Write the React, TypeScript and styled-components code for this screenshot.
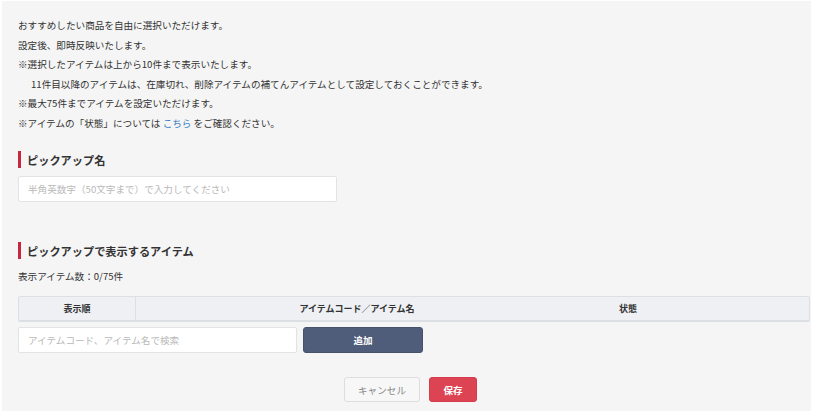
import React from 'react';
import styled, { createGlobalStyle } from 'styled-components';

const GlobalStyle = createGlobalStyle`
  html, body {
    margin: 0;
    padding: 0;
    background: #ffffff;
  }
  * {
    box-sizing: border-box;
  }
  input::placeholder {
    color: #b9b9b9;
  }
`;

const FONT = `"Noto Sans CJK JP", "Noto Sans", "Liberation Sans", sans-serif`;

const notes = [
  'おすすめしたい商品を自由に選択いただけます。',
  '設定後、即時反映いたします。',
  '※選択したアイテムは上から10件まで表示いたします。',
];

export default function App() {
  return (
    <>
      <GlobalStyle />
      <Page>
        <Panel>
          <Notes>
            {notes.map((n) => (
              <Note key={n}>{n}</Note>
            ))}
            <Note $indent>11件目以降のアイテムは、在庫切れ、削除アイテムの補てんアイテムとして設定しておくことができます。</Note>
            <Note>※最大75件までアイテムを設定いただけます。</Note>
            <Note>
              ※アイテムの「状態」については <Link>こちら</Link> をご確認ください。
            </Note>
          </Notes>

          <SectionTitle $top={18}>ピックアップ名</SectionTitle>
          <NameInput placeholder="半角英数字（50文字まで）で入力してください" />

          <SectionTitle $top={40}>ピックアップで表示するアイテム</SectionTitle>
          <Count>表示アイテム数：0/75件</Count>

          <TableHead>
            <HeadCell $divider>表示順</HeadCell>
            <HeadCell>アイテムコード／アイテム名</HeadCell>
            <HeadCell>状態</HeadCell>
            <HeadCell />
          </TableHead>

          <SearchRow>
            <SearchInput placeholder="アイテムコード、アイテム名で検索" />
            <AddButton>追加</AddButton>
          </SearchRow>

          <Actions>
            <CancelButton>キャンセル</CancelButton>
            <SaveButton>保存</SaveButton>
          </Actions>
        </Panel>
      </Page>
    </>
  );
}

const Page = styled.div`
  width: 813px;
  height: 414px;
  padding: 1px 2px 3px 2px;
  font-family: ${FONT};
  color: #333333;
`;

const Panel = styled.div`
  height: 410px;
  background: #f5f5f5;
  padding: 15px 1px 0 16px;
  display: flex;
  flex-direction: column;
`;

const Notes = styled.div`
  display: flex;
  flex-direction: column;
`;

const Note = styled.div<{ $indent?: boolean }>`
  font-size: 9.6px;
  line-height: 19.5px;
  color: #333333;
  white-space: nowrap;
  padding-left: ${(p) => (p.$indent ? '13px' : '0')};
`;

const Link = styled.span`
  color: #3b7fc4;
`;

const SectionTitle = styled.div<{ $top: number }>`
  margin-top: ${(p) => p.$top}px;
  height: 17px;
  border-left: 3px solid #c9253d;
  padding-left: 6px;
  display: flex;
  align-items: center;
  font-size: 11.2px;
  font-weight: 700;
  color: #333333;
`;

const BaseInput = styled.input`
  height: 26px;
  border: 1px solid #e3e3e3;
  border-radius: 2px;
  background: #ffffff;
  padding: 0 9px;
  font-family: ${FONT};
  font-size: 9.6px;
  color: #333333;
  outline: none;
`;

const NameInput = styled(BaseInput)`
  margin-top: 8px;
  width: 319px;
`;

const Count = styled.div`
  margin-top: 8px;
  font-size: 9.6px;
  line-height: 19px;
`;

const TableHead = styled.div`
  margin-top: 10px;
  height: 26px;
  display: grid;
  grid-template-columns: 117px 442px 100px 1fr;
  background: #eef0f3;
  border: 1px solid #dcdfe4;
  border-bottom-width: 2px;
  border-radius: 2px;
`;

const HeadCell = styled.div<{ $divider?: boolean }>`
  display: flex;
  align-items: center;
  justify-content: center;
  font-size: 9px;
  font-weight: 700;
  color: #333333;
  border-right: ${(p) => (p.$divider ? '1px solid #dcdfe4' : 'none')};
`;

const SearchRow = styled.div`
  margin-top: 5px;
  display: flex;
  gap: 6px;
`;

const SearchInput = styled(BaseInput)`
  width: 279px;
`;

const Button = styled.button`
  font-family: ${FONT};
  border-radius: 3px;
  display: flex;
  align-items: center;
  justify-content: center;
  padding: 0;
  cursor: pointer;
`;

const AddButton = styled(Button)`
  width: 120px;
  height: 26px;
  background: #505d7a;
  border: 1px solid #46526c;
  color: #ffffff;
  font-size: 9.6px;
  font-weight: 700;
`;

const Actions = styled.div`
  margin-top: 24px;
  display: flex;
  justify-content: center;
  gap: 9px;
  padding-right: 7px;
`;

const CancelButton = styled(Button)`
  width: 76px;
  height: 25px;
  background: #f7f7f7;
  border: 1px solid #dddddd;
  color: #888888;
  font-size: 9.6px;
`;

const SaveButton = styled(Button)`
  width: 48px;
  height: 25px;
  background: #dc4454;
  border: 1px solid #d43c4d;
  color: #ffffff;
  font-size: 9.6px;
  font-weight: 700;
`;
